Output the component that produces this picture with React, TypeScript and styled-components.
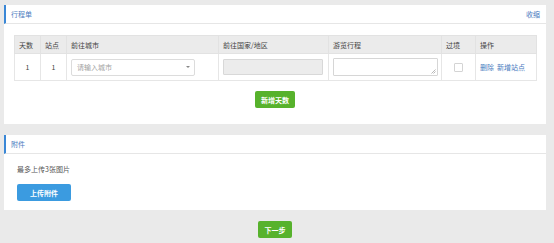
import styled, { createGlobalStyle } from "styled-components";

const GlobalStyle = createGlobalStyle`
  html, body {
    margin: 0;
    padding: 0;
    background: #eaeaea;
  }
  body {
    font-family: "Noto Sans CJK SC", "Noto Sans", sans-serif;
    font-size: 7px;
    color: #555;
  }
  * {
    box-sizing: border-box;
  }
`;

const Page = styled.div`
  width: 554px;
  height: 243px;
  padding: 5px 8px 0 4px;
  display: flex;
  flex-direction: column;
`;

const Panel = styled.div<{ $bottom: number }>`
  background: #fff;
  display: flex;
  flex-direction: column;
  padding-bottom: ${(p) => p.$bottom}px;
  margin-bottom: 11px;
`;

const PanelHeader = styled.div`
  height: 19px;
  display: flex;
  align-items: center;
  justify-content: space-between;
  padding: 0 6px 0 5px;
  border-left: 2px solid #3a87d6;
  border-bottom: 1px solid #e6e6e6;
`;

const Title = styled.span`
  color: #4a7cc0;
  font-size: 7px;
`;

const HeaderLink = styled.a`
  color: #4a7cc0;
  font-size: 7px;
  cursor: pointer;
`;

const Table = styled.table`
  margin: 11px 10px 0 10px;
  width: 522px;
  border-collapse: collapse;
  table-layout: fixed;
`;

const Th = styled.th<{ $w: number }>`
  width: ${(p) => p.$w}px;
  height: 18px;
  background: #ebebeb;
  border: 1px solid #e2e2e2;
  text-align: left;
  padding: 0 4px;
  font-weight: normal;
  color: #444;
  font-size: 7px;
`;

const Td = styled.td<{ $center?: boolean }>`
  height: 27px;
  border: 1px solid #e6e6e6;
  padding: 0 4px;
  text-align: ${(p) => (p.$center ? "center" : "left")};
  color: #444;
  font-size: 7px;
  vertical-align: middle;
`;

const Select = styled.div`
  width: 124px;
  height: 17px;
  border: 1px solid #dcdcdc;
  border-radius: 2px;
  display: flex;
  align-items: center;
  justify-content: space-between;
  padding: 0 4px 0 5px;
  color: #a3a3a3;
  font-size: 7px;
`;

const Caret = styled.span`
  width: 0;
  height: 0;
  border-left: 2px solid transparent;
  border-right: 2px solid transparent;
  border-top: 2px solid #888;
`;

const GrayInput = styled.div`
  width: 100px;
  height: 16px;
  background: #ececec;
  border: 1px solid #d8d8d8;
  border-radius: 1px;
`;

const TextArea = styled.div`
  position: relative;
  width: 105px;
  height: 18px;
  border: 1px solid #d6d6d6;
  border-radius: 1px;
  background: #fff;
`;

const Grip = styled.svg`
  position: absolute;
  right: 1px;
  bottom: 1px;
`;

const Check = styled.div`
  width: 9px;
  height: 9px;
  margin: 0 auto;
  border: 1px solid #d4d4d4;
  border-radius: 1px;
  background: #fff;
`;

const Link = styled.a`
  color: #4a7cc0;
  margin-right: 3px;
  cursor: pointer;
`;

const Center = styled.div<{ $top: number }>`
  display: flex;
  justify-content: center;
  margin-top: ${(p) => p.$top}px;
`;

const Button = styled.button<{ $color: string; $w: number }>`
  width: ${(p) => p.$w}px;
  height: 17px;
  border: 0;
  border-radius: 2px;
  background: ${(p) => p.$color};
  color: #fff;
  font-family: "Noto Sans CJK SC", "Noto Sans", sans-serif;
  font-size: 7px;
  font-weight: bold;
  padding: 0;
`;

const Body = styled.div`
  padding: 10px 13px 0 13px;
  display: flex;
  flex-direction: column;
  align-items: flex-start;
`;

const Note = styled.div`
  color: #555;
  font-size: 7px;
  height: 10px;
  line-height: 10px;
  margin-bottom: 10px;
`;

export default function App() {
  return (
    <>
      <GlobalStyle />
      <Page>
        <Panel $bottom={16}>
          <PanelHeader>
            <Title>行程单</Title>
            <HeaderLink>收缩</HeaderLink>
          </PanelHeader>
          <Table>
            <thead>
              <tr>
                <Th $w={26}>天数</Th>
                <Th $w={26}>站点</Th>
                <Th $w={152}>前往城市</Th>
                <Th $w={110}>前往国家/地区</Th>
                <Th $w={113}>游览行程</Th>
                <Th $w={34}>过境</Th>
                <Th $w={61}>操作</Th>
              </tr>
            </thead>
            <tbody>
              <tr>
                <Td $center>1</Td>
                <Td $center>1</Td>
                <Td>
                  <Select>
                    请输入城市
                    <Caret />
                  </Select>
                </Td>
                <Td>
                  <GrayInput />
                </Td>
                <Td>
                  <TextArea>
                    <Grip width="5" height="5" viewBox="0 0 5 5">
                      <path d="M4.5 0.5 L0.5 4.5 M4.5 2.5 L2.5 4.5" stroke="#999" strokeWidth="0.7" />
                    </Grip>
                  </TextArea>
                </Td>
                <Td>
                  <Check />
                </Td>
                <Td>
                  <Link>删除</Link>
                  <Link>新增站点</Link>
                </Td>
              </tr>
            </tbody>
          </Table>
          <Center $top={10}>
            <Button $color="#57b22c" $w={40}>新增天数</Button>
          </Center>
        </Panel>
        <Panel $bottom={9}>
          <PanelHeader>
            <Title>附件</Title>
          </PanelHeader>
          <Body>
            <Note>最多上传3张图片</Note>
            <Button $color="#3b9be0" $w={54}>上传附件</Button>
          </Body>
        </Panel>
        <Center $top={0}>
          <Button $color="#57b22c" $w={34}>下一步</Button>
        </Center>
      </Page>
    </>
  );
}
